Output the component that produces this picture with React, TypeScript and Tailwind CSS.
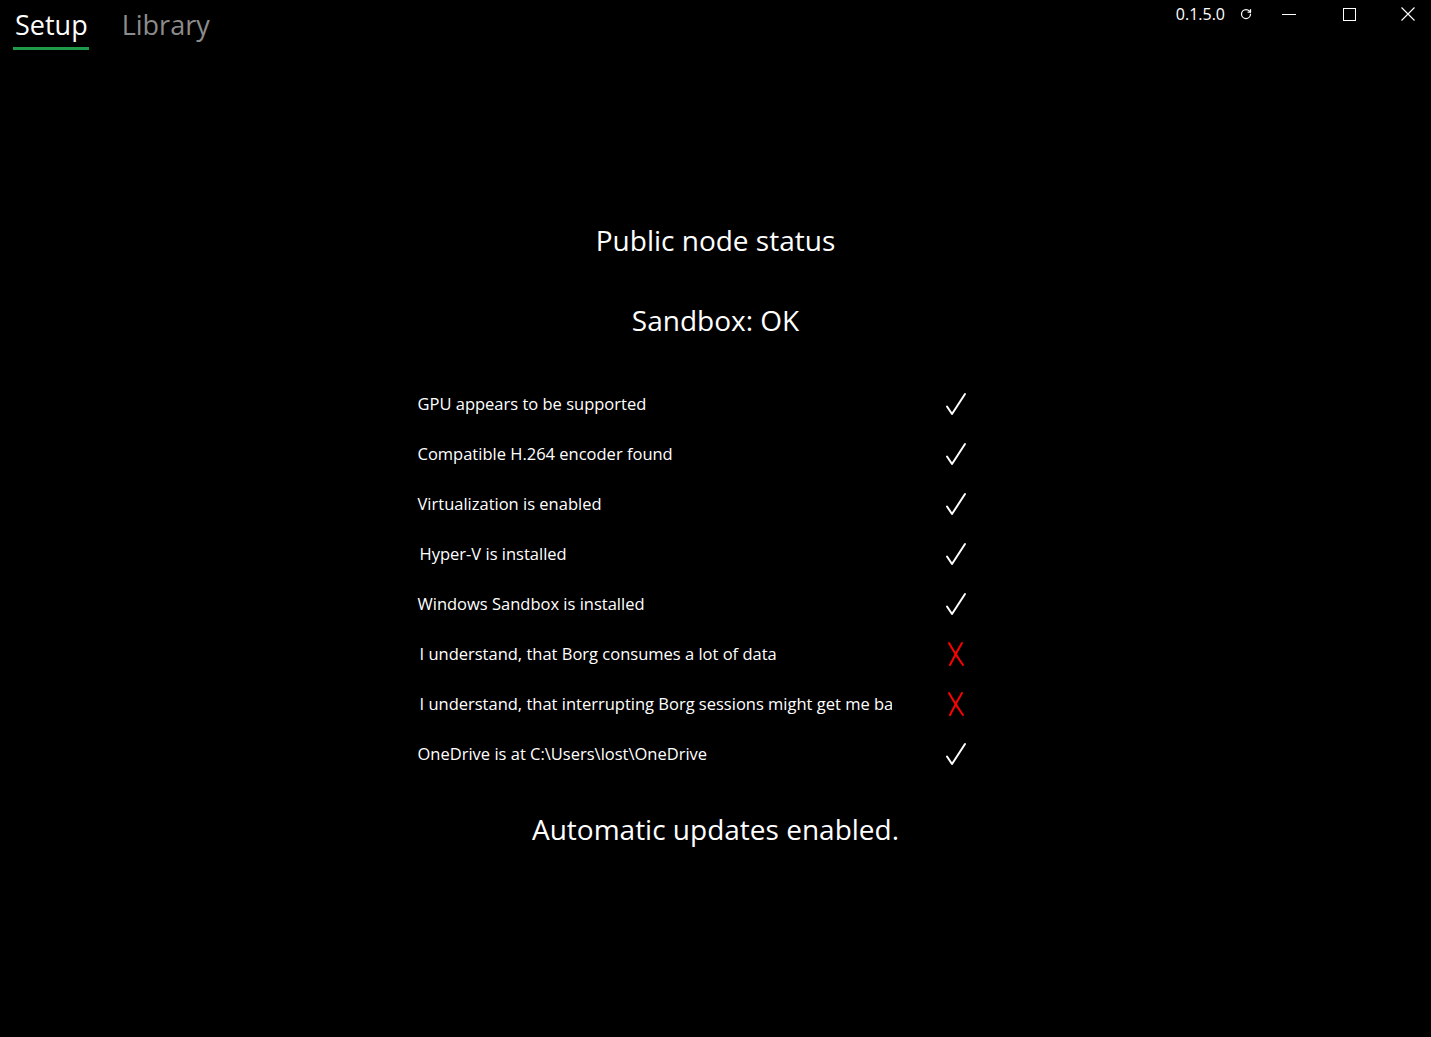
import { RotateCw } from "lucide-react";

const checks: { label: string; ok: boolean; indent?: boolean }[] = [
  { label: "GPU appears to be supported", ok: true },
  { label: "Compatible H.264 encoder found", ok: true },
  { label: "Virtualization is enabled", ok: true },
  { label: "Hyper-V is installed", ok: true, indent: true },
  { label: "Windows Sandbox is installed", ok: true },
  { label: "I understand, that Borg consumes a lot of data", ok: false, indent: true },
  { label: "I understand, that interrupting Borg sessions might get me banned", ok: false, indent: true },
  { label: "OneDrive is at C:\\Users\\lost\\OneDrive", ok: true },
];

function CheckMark() {
  return (
    <svg width="24" height="26" viewBox="0 0 24 26" fill="none">
      <path d="M3 15.5 L8 23 L21 3" stroke="white" strokeWidth="2" strokeLinecap="round" strokeLinejoin="round" />
    </svg>
  );
}

function CrossMark() {
  return (
    <svg width="24" height="28" viewBox="0 0 24 28" fill="none">
      <path d="M5 3 Q10 12 19 25" stroke="#ff0000" strokeWidth="2" strokeLinecap="round" />
      <path d="M18 3 Q12 13 6 25" stroke="#ff0000" strokeWidth="2" strokeLinecap="round" />
    </svg>
  );
}

export default function App() {
  return (
    <div
      className="min-h-[1037px] w-full bg-black text-white"
      style={{ fontFamily: '"Open Sans", "Noto Sans", sans-serif' }}
    >
      {/* Barra superior: pestañas + controles de ventana */}
      <div className="flex items-start justify-between h-[60px]">
        <div className="flex items-start gap-[32px] pl-[13px]">
          <div className="flex flex-col items-center">
            <span className="text-[27px] leading-[52px] text-white px-[2px] -mt-[1px]">Setup</span>
            <div className="h-[3px] w-[76px] bg-[#1f9a48] -mt-[4px]" />
          </div>
          <span className="text-[27px] leading-[52px] text-[#8c8c8c] -mt-[1px]">Library</span>
        </div>
        <div className="flex items-center h-[28px]">
          <span className="text-[16px] text-white mr-[15px]">0.1.5.0</span>
          <RotateCw size={12} strokeWidth={2.5} className="text-white mr-[12px]" />
          <div className="w-[50px] flex justify-center">
            <div className="w-[14px] h-px bg-white" />
          </div>
          <div className="w-[70px] flex justify-center">
            <div className="w-[13px] h-[13px] border border-white" />
          </div>
          <div className="w-[47px] flex justify-center">
            <svg width="14" height="14" viewBox="0 0 14 14">
              <path d="M0.5 0.5 L13.5 13.5 M13.5 0.5 L0.5 13.5" stroke="white" strokeWidth="1.1" />
            </svg>
          </div>
        </div>
      </div>

      {/* Estado del nodo */}
      <div className="flex flex-col items-center pt-[160px]">
        <h1 className="text-[28px] leading-[40px]">Public node status</h1>
        <h2 className="text-[28px] leading-[40px] mt-[40px]">Sandbox: OK</h2>

        <div className="w-[600px] mt-[39px] flex flex-col">
          {checks.map((c) => (
            <div key={c.label} className="flex items-center h-[50px]">
              <div
                className={`w-[476px] overflow-hidden whitespace-nowrap text-[16.5px] leading-[24px] ${
                  c.indent ? "pl-[4px]" : "pl-[2px]"
                }`}
              >
                {c.label}
              </div>
              <div className="flex-1 flex justify-center pl-[4px]">
                {c.ok ? <CheckMark /> : <CrossMark />}
              </div>
            </div>
          ))}
        </div>

        <p className="text-[28px] leading-[40px] mt-[30px]">Automatic updates enabled.</p>
      </div>
    </div>
  );
}
